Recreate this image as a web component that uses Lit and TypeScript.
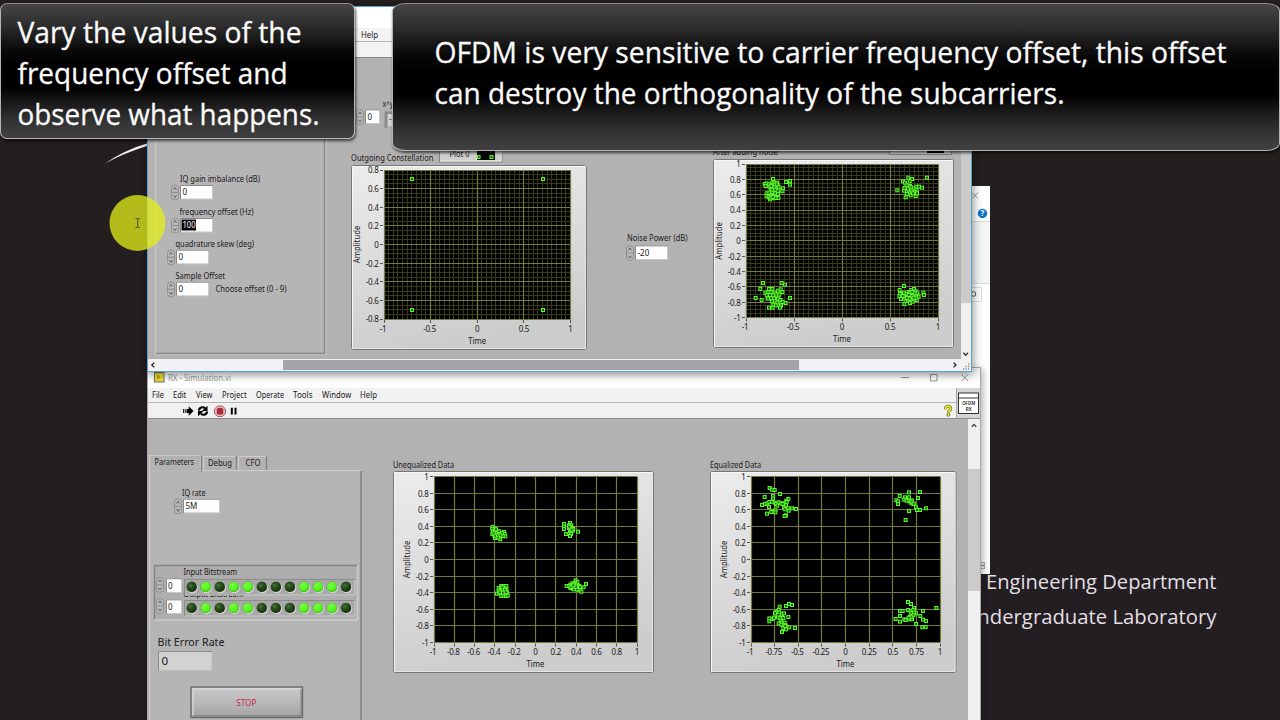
import { LitElement, html, svg, css } from "lit";
import { customElement } from "lit/decorators.js";

type Anchor = "start" | "middle" | "end";

/** Text on a drawing surface, fitted to a given width. */
const label = (
  x: number,
  y: number,
  text: string,
  width = 0,
  cls = "small",
  anchor: Anchor = "start",
) =>
  width
    ? svg`<text class=${cls} x=${x} y=${y} text-anchor=${anchor} textLength=${width} lengthAdjust="spacingAndGlyphs">${text}</text>`
    : svg`<text class=${cls} x=${x} y=${y} text-anchor=${anchor}>${text}</text>`;

/** Inline text with a fixed advance, for bars laid out by flow. */
const word = (text: string, width: number) => html`<svg class="word" width=${width + 1} height="14">
  ${label(0, 9.8, text, width)}
</svg>`;

interface Plot {
  title: string;
  titleX: number;
  titleY: number;
  titleW: number;
  frame: [number, number, number, number];
  area: [number, number, number, number];
  xTicks: string[];
  yTicks: string[];
  minor?: [number, number];
  axis: [number, number];
  origin: [number, number];
  points: string;
}

const outgoing: Plot = {
  title: "Outgoing Constellation",
  titleX: 351,
  titleY: 161,
  titleW: 82.5,
  frame: [351.5, 165.5, 235, 184],
  area: [384, 170, 186.5, 149],
  xTicks: ["-1", "-0.5", "0", "0.5", "1"],
  yTicks: ["0.8", "0.6", "0.4", "0.2", "0", "-0.2", "-0.4", "-0.6", "-0.8"],
  minor: [40, 32],
  axis: [360.3, 244.5],
  origin: [340, 90],
  points: "216,267 609,267 216,660 609,660",
};

const noisy: Plot = {
  title: "After adding noise",
  titleX: 713,
  titleY: 155,
  titleW: 65,
  frame: [713.5, 159.5, 240, 188],
  area: [746, 164, 192, 153.5],
  xTicks: ["-1", "-0.5", "0", "0.5", "1"],
  yTicks: ["1", "0.8", "0.6", "0.4", "0.2", "0", "-0.2", "-0.4", "-0.6", "-0.8", "-1"],
  minor: [40, 40],
  axis: [722, 241],
  origin: [600, 130],
  points:
    "519,147 494,162 500,160 507,163 515,160 523,158 531,158 497,168 508,170 519,168 527,168 533,165 512,174 520,176 529,174 536,170 523,180 515,184 542,181 549,175 547,184 558,156 570,153 570,164 500,190 508,188 517,186 526,190 500,198 506,202 514,198 522,200 530,198 535,204 510,208 520,205 534,192 526,204 516,165 524,164 530,163 514,168 523,172 517,179 526,179 512,203 518,201 " +
    "925,143 936,147 909,154 915,158 929,154 981,143 892,181 920,166 930,168 914,174 924,176 934,172 941,176 949,170 957,170 966,173 950,180 945,186 935,184 926,188 932,196 921,192 917,202 947,198 951,190 912,182 939,190 " +
    "489,459 481,477 467,504 485,510 545,459 555,464 570,504 557,519 507,477 517,477 496,488 505,487 514,486 524,488 534,482 542,478 547,486 500,496 510,495 519,496 529,494 538,494 504,506 513,504 522,505 534,506 541,510 516,514 525,514 532,518 541,518 548,516 520,524 528,526 536,526 543,527 507,533 518,533 540,533 " +
    "912,468 899,480 900,492 898,499 903,507 908,498 912,488 920,492 926,486 934,480 942,477 947,484 940,490 932,494 924,500 934,502 944,498 952,494 956,500 970,488 972,495 950,510 942,508 932,510 924,512 916,508 913,522 930,519 938,515 952,488 921,504 949,503 930,490 937,497 929,506 941,503 927,495 944,490 937,486",
};

const unequalized: Plot = {
  title: "Unequalized Data",
  titleX: 393,
  titleY: 467.5,
  titleW: 61,
  frame: [393.5, 471.5, 260, 201],
  area: [434, 476.5, 203, 166],
  xTicks: ["-1", "-0.8", "-0.6", "-0.4", "-0.2", "0", "0.2", "0.4", "0.6", "0.8", "1"],
  yTicks: ["1", "0.8", "0.6", "0.4", "0.2", "0", "-0.2", "-0.4", "-0.6", "-0.8", "-1"],
  axis: [410.3, 559.5],
  origin: [380, 450],
  points:
    "338,231 337,237 344,236 339,244 345,244 337,252 343,256 350,248 358,244 372,246 350,254 357,252 364,252 374,252 376,259 368,258 345,264 352,260 360,262 361,268 366,250 348,238 341,250 347,258 354,256 361,256 355,263 " +
    "552,222 552,230 552,237 570,219 567,226 574,226 567,234 575,234 570,240 578,242 572,247 558,252 566,252 573,252 570,258 594,245 580,237 571,230 571,236 575,239 568,230 " +
    "364,408 372,408 379,408 356,414 363,416 371,415 379,416 356,422 364,424 372,423 380,424 351,431 358,430 366,432 375,430 382,430 364,438 371,436 378,438 383,437 368,420 375,420 361,427 369,428 377,427 367,412 " +
    "587,391 592,396 585,398 577,400 571,404 560,408 568,408 576,408 584,406 592,404 598,408 571,414 578,416 586,414 594,412 600,412 618,402 611,412 598,420 604,425 590,418 582,418 574,411 581,411 588,410 582,402 580,406",
};

const equalized: Plot = {
  title: "Equalized Data",
  titleX: 710,
  titleY: 467.5,
  titleW: 51,
  frame: [710.5, 471.5, 245.5, 201],
  area: [751, 476.5, 189, 166],
  xTicks: ["-1", "-0.75", "-0.5", "-0.25", "0", "0.25", "0.5", "0.75", "1"],
  yTicks: ["1", "0.8", "0.6", "0.4", "0.2", "0", "-0.2", "-0.4", "-0.6", "-0.8", "-1"],
  axis: [727.3, 559.5],
  origin: [700, 450],
  points:
    "209,114 216,119 224,120 240,132 194,141 219,138 219,146 265,147 186,165 195,162 202,160 208,156 216,155 224,158 207,171 228,162 236,157 244,160 232,167 254,160 259,152 260,156 248,162 258,166 252,173 256,178 265,175 276,175 288,177 266,182 226,181 218,184 226,187 201,191 258,196 254,198 214,186 " +
    "627,127 660,126 599,138 615,142 627,142 654,144 589,151 594,154 611,149 620,152 628,154 635,151 594,162 632,158 640,162 636,155 641,161 648,172 651,180 627,183 660,180 678,175 617,210 " +
    "239,470 258,468 267,462 276,465 226,488 236,480 229,486 238,487 225,490 246,493 252,490 208,505 217,507 222,503 208,514 234,502 241,504 250,504 265,501 242,512 236,520 246,518 254,518 248,526 257,526 250,534 258,538 268,532 285,534 246,546 256,528 244,524 " +
    "624,456 633,462 600,483 608,483 624,480 632,484 642,474 640,480 648,490 634,490 642,488 669,483 709,474 600,498 587,507 600,515 613,508 617,510 626,508 636,508 630,500 640,496 634,502 661,498 669,509 678,513 648,522 667,532 677,531 626,503",
};

const steps = (n: number) => Array.from({ length: n + 1 }, (_, i) => i / n);

const drawPlot = (p: Plot) => {
  const [fx, fy, fw, fh] = p.frame;
  const [ax, ay, aw, ah] = p.area;
  const xs = steps(p.xTicks.length - 1);
  const ys = steps(p.yTicks.length - 1);
  const snap = (v: number) => Math.round(v) + 0.5;
  const grid = (sx: number[], sy: number[]) =>
    sx.map((t) => `M${snap(ax + t * aw - 0.5)} ${ay}v${ah}`).join("") +
    sy.map((t) => `M${ax} ${snap(ay + t * ah - 0.5)}h${aw}`).join("");
  return svg`
    ${label(p.titleX, p.titleY, p.title, p.titleW)}
    <rect x=${fx} y=${fy} width=${fw} height=${fh} rx="2" fill="url(#plate)" stroke="#777"/>
    <path d=${`M${fx + 1} ${fy + fh - 1}V${fy + 1}H${fx + fw - 1}`} fill="none" stroke="#f8f8f8"/>
    <path d=${`M${fx + 1} ${fy + fh - 1}H${fx + fw - 1}V${fy + 1}`} fill="none" stroke="#e4e4e4"/>
    <rect x=${ax} y=${ay} width=${aw} height=${ah} fill="#000"/>
    ${p.minor ? svg`<path class="minor" d=${grid(steps(p.minor[0]), steps(p.minor[1]))}/>` : null}
    <path class="major" d=${grid(xs, ys)}/>
    ${xs.map(
      (t, i) => svg`<path class="tick" d=${`M${snap(ax + t * aw - 0.5)} ${ay + ah + 1}v3`}/>
        ${label(ax + t * aw - (p.xTicks[i][0] === "-" ? 1 : 0), ay + ah + 12.7, p.xTicks[i], 0, "num", "middle")}`,
    )}
    ${ys.map(
      (t, i) => svg`<path class="tick" d=${`M${ax - 4} ${snap(ay + t * ah - 0.5)}h3`}/>
        ${label(ax - 5.5, ay + t * ah + 3.4, p.yTicks[i], 0, "num", "end")}`,
    )}
    ${label(ax + aw / 2, ay + ah + 24.5, "Time", 18, "small", "middle")}
    <g transform=${`translate(${p.axis[0]} ${p.axis[1]}) rotate(-90)`}>${label(0, 0, "Amplitude", 37.5, "small", "middle")}</g>
    ${p.points.split(" ").map((pt) => {
      const [zx, zy] = pt.split(",").map(Number);
      const x = p.origin[0] + zx / 3 - 1.5;
      const y = p.origin[1] + zy / 3 - 1.5;
      return svg`<rect class="dot" x=${x} y=${y} width="3" height="3"/>`;
    })}`;
};

const spinner = (x: number, y: number) => svg`
  <rect x=${x - 3.5} y=${y - 7.5} width="7" height="15" rx="3.5" fill="#b9b9b9" stroke="#858585" stroke-width=".8"/>
  <path d=${`M${x - 3} ${y}h6`} stroke="#808080" stroke-width=".8"/>
  <path d=${`M${x - 1.5} ${y - 2.7}l1.5 -2.4 1.5 2.4M${x - 1.5} ${y + 2.7}l1.5 2.4 1.5 -2.4`} fill="none" stroke="#4a4a4a" stroke-width=".8"/>`;

const field = (x: number, y: number, w: number, h: number, fill = "#fdfdfd") => svg`
  <rect x=${x - 1} y=${y - 1} width=${w + 2} height=${h + 2} fill="#c9c9c9"/>
  <path d=${`M${x - 0.5} ${y + h + 1}V${y - 0.5}H${x + w + 1}`} fill="none" stroke="#8a8a8a"/>
  <rect x=${x} y=${y} width=${w} height=${h} fill=${fill}/>`;

const numeric = (x: number, cy: number, w: number, value: string) => svg`
  ${spinner(x - 6, cy)}${field(x, cy - 6.5, w, 12.5)}${label(x + 1.5, cy + 2.8, value)}`;

const gradients = svg`<defs>
  <linearGradient id="plate" x1="0" y1="0" x2=".25" y2="1">
    <stop offset="0" stop-color="#ececec"/><stop offset="1" stop-color="#cdcdcd"/>
  </linearGradient>
  <linearGradient id="button" x1="0" y1="0" x2="0" y2="1">
    <stop offset="0" stop-color="#c9c9c9"/><stop offset=".5" stop-color="#b9b9b9"/><stop offset="1" stop-color="#a2a2a2"/>
  </linearGradient>
  <radialGradient id="on" cx=".4" cy=".35" r=".7">
    <stop offset="0" stop-color="#7dff4a"/><stop offset=".6" stop-color="#55f71e"/><stop offset="1" stop-color="#3cc60f"/>
  </radialGradient>
  <radialGradient id="off" cx=".38" cy=".35" r=".7">
    <stop offset="0" stop-color="#4d7140"/><stop offset=".4" stop-color="#27501a"/><stop offset="1" stop-color="#142c0c"/>
  </radialGradient>
</defs>`;

const BITS = "010110001110";

const bitRow = (cy: number) => svg`
  ${spinner(160, cy - 2)}${field(167, cy - 7.5, 14, 12.5)}${label(168, cy + 2, "0")}
  <rect x="184.5" y=${cy - 7.5} width="170" height="15" fill="#a9a9a9"/>
  <path d=${`M184.5 ${cy + 8}V${cy - 7.5}H355`} fill="none" stroke="#8b8b8b"/>
  <path d=${`M185 ${cy + 8}H355V${cy - 7}`} fill="none" stroke="#c9c9c9"/>
  ${[...BITS].map((b, i) => {
    const x = 191.7 + i * 14.03;
    return svg`<circle cx=${x + 0.7} cy=${cy + 0.9} r="5.5" fill="#d2d2d2"/>
      <circle cx=${x - 0.2} cy=${cy - 0.2} r="5.4" fill="#7f8a7c"/>
      <circle cx=${x} cy=${cy} r="5.1" fill=${b === "1" ? "url(#on)" : "url(#off)"}/>`;
  })}`;

const sheet = css`
  :host {
    display: block;
  }
  svg {
    display: block;
    flex: none;
  }
  .word {
    overflow: visible;
  }
  text {
    fill: #1a1a1a;
    font-family: "Noto Sans", "Open Sans", sans-serif;
  }
  .small {
    font-size: 8px;
  }
  .num {
    font-size: 8px;
    letter-spacing: -0.3px;
  }
  .dim {
    font-size: 8px;
    fill: #9c9c9c;
  }
  .minor {
    stroke: #383a1a;
    fill: none;
  }
  .major {
    stroke: #747a3c;
    fill: none;
    stroke-width: 1.2;
  }
  .tick {
    stroke: #555;
    fill: none;
  }
  .dot {
    fill: #17600b;
    stroke: #5cf52c;
    stroke-width: 1;
  }
`;

@customElement("tx-window")
class TxWindow extends LitElement {
  static styles = [
    sheet,
    css`
      .window {
        box-sizing: border-box;
        width: 825px;
        height: 366px;
        border: 1px solid #5e9fce;
        background: #b2b2b2;
        display: flex;
        flex-direction: column;
        box-shadow: 1px 2px 9px rgba(0, 0, 0, 0.45);
      }
      .title {
        height: 21px;
        background: #fff;
      }
      .menu {
        height: 13px;
        display: flex;
        align-items: center;
        padding-left: 212.5px;
        background: #f3f3f3;
        border-bottom: 1px solid #b5b5b5;
      }
      .tools {
        height: 15px;
        background: #f3f3f3;
        border-bottom: 1px solid #8c8c8c;
      }
      .body {
        display: flex;
        flex: 1;
        min-height: 0;
      }
      .vbar {
        width: 10px;
        background: #f0f0f0;
        display: flex;
        flex-direction: column;
        justify-content: space-between;
      }
      .vthumb {
        height: 245px;
        background: #cbcbcb;
      }
      .hbar {
        height: 12px;
        display: flex;
        align-items: stretch;
        background: #f1f1f4;
      }
      .hthumb {
        width: 516px;
        margin: 1px 0 1px 124px;
        background: #a4a3a7;
      }
      .harrow {
        margin-left: 150px;
      }
      .selected {
        fill: #fff;
      }
    `,
  ];
  render() {
    return html`<section class="window">
      <header class="title"></header>
      <nav class="menu">${word("Help", 17)}</nav>
      <div class="tools"></div>
      <div class="body">
        <svg width="813" height="301" viewBox="148 58 813 301">
          ${gradients}
          <rect x="155" y="40" width="170" height="314" fill="#b5b5b5" />
          <path d="M155.5 50V353.5" stroke="#c8c8c8" stroke-width="1.5" />
          <path d="M156 353.5H324.5V50" fill="none" stroke="#858585" stroke-width="1.3" />
          <path d="M155 354.7H326V50" fill="none" stroke="#c2c2c2" />
          ${numeric(366, 117, 13, "0")} ${label(382.5, 107, "x^y", 11)}
          <path d="M386 128V113H395" fill="none" stroke="#8b8b8b" stroke-width="3" />
          <path d="M387.5 128V115H395V128z" fill="#b0b0b0" />
          <rect x="388" y="114" width="10" height="12" fill="#d6d6d6" />${label(389, 122, "-")}
          ${label(180, 181.5, "IQ gain imbalance (dB)", 80)} ${numeric(181, 192.5, 31, "0")}
          ${label(179.5, 214.5, "frequency offset (Hz)", 74)} ${numeric(181, 225.5, 31, "")}
          <rect x="181.5" y="219.5" width="14.5" height="11" fill="#050505" />
          ${label(182.5, 228.3, "100", 13, "small selected")}
          ${label(175.5, 246.5, "quadrature skew (deg)", 78.5)} ${numeric(177, 257.3, 31, "0")}
          ${label(175.5, 278.5, "Sample Offset", 49.5)} ${numeric(177, 289.3, 31, "0")}
          ${label(215.5, 292.3, "Choose offset (0 - 9)", 71)}
          <rect x="439.5" y="145.5" width="62.5" height="16.5" fill="#cfcfcf" stroke="#838383" />
          <path d="M440.5 161H501V146" fill="none" stroke="#eee" />
          ${label(449.5, 156.8, "Plot 0", 20)}
          <rect x="477" y="148" width="18" height="12" fill="#050505" />
          <rect class="dot" x="477.5" y="155.5" width="2.5" height="3" />
          <rect class="dot" x="490" y="155.5" width="3" height="3" />
          ${drawPlot(outgoing)}
          ${label(627, 241, "Noise Power (dB)", 60.5)} ${numeric(636, 253, 31, "-20")}
          <rect x="889.5" y="140.5" width="62" height="14" fill="#cfcfcf" stroke="#838383" />
          <rect x="927" y="144" width="17" height="9" fill="#050505" />
          ${drawPlot(noisy)}
        </svg>
        <div class="vbar">
          <div class="vthumb"></div>
          <svg width="9" height="11"><path d="M2.4 4.8 4.7 7.3 7 4.8" fill="none" stroke="#333" stroke-width="1.3" /></svg>
        </div>
      </div>
      <footer class="hbar">
        <svg width="11" height="12"><path d="M6.3 3.6 3.8 6l2.5 2.4" fill="none" stroke="#222" stroke-width="1.3" /></svg>
        <div class="hthumb"></div>
        <svg class="harrow" width="22" height="12">
          <path d="M4.500 3.600 7 6 4.500 8.400" fill="none" stroke="#222" stroke-width="1.3" />
          <path d="M19 5h1.400M16.500 7.500h1.400M19 7.500h1.400M14 10h1.400M16.500 10h1.400M19 10h1.400" stroke="#999" stroke-width="1.300" />
        </svg>
      </footer>
    </section>`;
  }
}

const MENU: [string, number][] = [
  ["File", 12],
  ["Edit", 13.3],
  ["View", 16.5],
  ["Project", 24.7],
  ["Operate", 28],
  ["Tools", 19.5],
  ["Window", 29.3],
  ["Help", 17],
];

@customElement("rx-window")
class RxWindow extends LitElement {
  static styles = [
    sheet,
    css`
      .window {
        box-sizing: border-box;
        width: 834px;
        height: 353px;
        border: 1px solid #a9a9a9;
        border-bottom: 0;
        background: #b2b2b2;
        display: flex;
        flex-direction: column;
        box-shadow: 2px 2px 7px rgba(0, 0, 0, 0.3);
      }
      .title {
        height: 20px;
        display: flex;
        align-items: center;
        background: linear-gradient(#eef2f3, #fff 70%);
      }
      .grow {
        flex: 1;
      }
      .head {
        box-sizing: border-box;
        display: flex;
        height: 31px;
        background: #f1f1f1;
        border-bottom: 1px solid #8c8c8c;
      }
      .bars {
        flex: 1;
        display: flex;
        flex-direction: column;
        border-right: 1px solid #aaa;
      }
      .menu {
        height: 14px;
        display: flex;
        align-items: center;
        gap: 8.3px;
        padding-left: 4px;
        border-bottom: 1px solid #b5b5b5;
      }
      .tools {
        flex: 1;
        display: flex;
        justify-content: space-between;
        align-items: center;
        padding: 0 2px 0 33px;
      }
      .body {
        display: flex;
        height: 301px;
      }
      .vbar {
        width: 12px;
        height: 301px;
        background: #f0f0f0;
      }
      .vthumb {
        height: 122px;
        margin-top: 38px;
        background: #cbcbcb;
      }
      .stop {
        font-size: 8.8px;
        fill: #c81e46;
      }
      .big {
        font-size: 11.5px;
      }
      .badge {
        font-size: 5px;
        font-weight: 600;
      }
    `,
  ];
  render() {
    return html`<section class="window">
      <header class="title">
        <svg width="20" height="20">
          <rect x="6.500" y="4.500" width="9.500" height="9.500" fill="#e9dd2c" stroke="#6d7079" />
          <path d="M9 6.500v5.500l4-2.700z" fill="#c89a10" />
        </svg>
        <svg class="word" width="66" height="20">${label(0, 12.8, "RX - Simulation.vi", 63, "dim")}</svg>
        <div class="grow"></div>
        <svg width="81" height="20">
          <path d="M2 9.500h8M31.500 6.500h6.500v6.500h-6.500zM62.500 6.500l6.500 6.500M69 6.500l-6.500 6.500" fill="none" stroke="#888" stroke-width=".9" />
        </svg>
      </header>
      <div class="head">
        <div class="bars">
          <nav class="menu">${MENU.map(([t, w]) => word(t, w))}</nav>
          <div class="tools">
            <svg width="60" height="14">
              <path d="M2.500 5v4M4.200 5v4" stroke="#222" stroke-width="1" />
              <path d="M5.500 5h2.200V2.300L12.500 7l-4.800 4.700V9H5.500z" fill="#000" />
              <path d="M18 6.500c0-3 4-4.200 6-2.300M26 7.500c0 3-4 4.200-6 2.300" fill="none" stroke="#000" stroke-width="2.200" />
              <path d="M26.500 1.800v5.200h-5.700zM17 12.200V7h5.700z" fill="#000" />
              <path d="M36.700 2h4.600l3.200 3v4.500l-3.200 3h-4.600l-3.200-3V5z" fill="#e8b5b8" stroke="#884a50" stroke-width=".8" />
              <rect x="35.800" y="4" width="6.400" height="6.400" rx="1.500" fill="#a92b3b" />
              <path d="M50.800 3.800v6.600M54.500 3.800v6.600" stroke="#000" stroke-width="2" />
            </svg>
            <svg width="12" height="14">
              <path d="M3.500 5.200C3.500 1.200 9 1.500 8.700 4.800c-.3 2-2.300 1.800-2.300 3.800" fill="none" stroke="#55551c" stroke-width="3" />
              <path d="M3.500 5.200C3.500 1.200 9 1.500 8.700 4.800c-.3 2-2.300 1.800-2.300 3.800" fill="none" stroke="#e2ea22" stroke-width="1.900" />
              <circle cx="6.400" cy="10.800" r="1.500" fill="#e2ea22" stroke="#55551c" stroke-width=".7" />
            </svg>
          </div>
        </div>
        <svg width="23" height="30" viewBox="957 388 23 30">
          <rect x="957" y="388" width="23" height="31" fill="#d5d5d5" />
          <rect x="958.500" y="393" width="20" height="20.500" fill="#fff" stroke="#333" />
          <path d="M958 398h21" stroke="#333" />
          ${label(968.7, 405, "OFDM", 13, "badge", "middle")} ${label(968.7, 411, "RX", 6, "badge", "middle")}
        </svg>
      </div>
      <div class="body">
        <svg width="820" height="301" viewBox="148 419 820 301">
          ${gradients}
          <rect x="148" y="470" width="213" height="250" fill="#b5b5b5" />
          <path d="M149.500 720V455.500h51V470.500H361" fill="none" stroke="#cdcdcd" />
          <path d="M201.500 456V471.500M361 471V720" fill="none" stroke="#7f7f7f" stroke-width="1.400" />
          <path d="M203.500 470V456.500h32M238.500 470V456.500H266" fill="none" stroke="#cdcdcd" />
          <path d="M236.500 456V470M266.500 456V470" stroke="#858585" stroke-width="1.300" />
          ${label(154.5, 464.5, "Parameters", 39.5)} ${label(208, 465.5, "Debug", 24)}
          ${label(245.5, 465.5, "CFO", 15)} ${label(182, 495.5, "IQ rate", 23.5)}
          ${numeric(184, 506.3, 35, "5M")}
          <rect x="154" y="565" width="203" height="55" fill="#aeaeae" />
          <path d="M154.500 620V565.500H357" fill="none" stroke="#848484" stroke-width="1.500" />
          <path d="M154 620H357.500V566" fill="none" stroke="#cacaca" stroke-width="1.500" />
          ${label(183.5, 574.9, "Input Bitstream", 53.5)} ${label(183.5, 596.5, "Output Bitstream", 60)}
          ${bitRow(586.9)} ${bitRow(608)}
          ${label(157.5, 645.5, "Bit Error Rate", 67, "big")}
          ${field(159, 652, 52, 17.5, "#d2d3d1")} ${label(161.5, 665, "0", 0, "big")}
          <rect x="191" y="687" width="111.500" height="30.500" fill="url(#button)" stroke="#6c6c6c" stroke-width="1.400" />
          <path d="M193 716V689H301" fill="none" stroke="#d8d8d8" stroke-width="1.300" />
          <path d="M193 716H301.200V689" fill="none" stroke="#828282" stroke-width="1.300" />
          ${label(246.3, 705.5, "STOP", 20, "stop", "middle")}
          ${drawPlot(unequalized)} ${drawPlot(equalized)}
        </svg>
        <div class="vbar">
          <svg width="12" height="12"><path d="M3.700 7.800 6 5.300 8.300 7.800" fill="none" stroke="#333" stroke-width="1.200" /></svg>
          <div class="vthumb"></div>
        </div>
      </div>
    </section>`;
  }
}

@customElement("app-root")
class AppRoot extends LitElement {
  static styles = [
    sheet,
    css`
      .desktop {
        position: relative;
        width: 1280px;
        height: 720px;
        overflow: hidden;
        background: linear-gradient(#231f1f 0 238px, #231e22 240px);
      }
      .layer {
        position: absolute;
      }
      .wall {
        left: 0;
        top: 0;
      }
      .files {
        left: 800px;
        top: 186px;
      }
      .rx {
        left: 147px;
        top: 367px;
      }
      .tx {
        left: 147px;
        top: 6px;
      }
      .note {
        box-sizing: border-box;
        border: 1px solid #b4b4b4;
        border-top-color: #8c8c8c;
        background: linear-gradient(#454545, #2d2d2d 16%, #070707 36%, #000 48%, #000 62%, #161616 72%, #343434 88%, #404040);
        box-shadow: 1px 2px 3px rgba(0, 0, 0, 0.65);
      }
      .note-a {
        left: 0;
        top: 3px;
        width: 355px;
        height: 136px;
        border-radius: 7px;
      }
      .note-b {
        left: 392px;
        top: 3px;
        width: 888px;
        height: 148px;
        border-radius: 14px / 8px;
      }
      .caption {
        font-family: "Open Sans", "Noto Sans", sans-serif;
        font-size: 28.3px;
        fill: #fafafa;
        stroke: #fafafa;
        stroke-width: 0.3px;
      }
      .brand {
        font-family: "Open Sans", "Noto Sans", sans-serif;
        font-size: 20.8px;
        fill: #e4dfe3;
      }
      .help {
        font-size: 8px;
        font-weight: 700;
        fill: #fff;
      }
      .pointer {
        left: 109px;
        top: 194px;
      }
    `,
  ];
  render() {
    return html`<main class="desktop">
      <svg class="layer wall" width="1280" height="720">
        <path d="M105 163.500Q124 150 150 142.500L150 145Q124 153 105 163.500z" fill="#eee" />
        ${label(1216.5, 589, "Computer Engineering Department", 330.5, "brand", "end")}
        ${label(1216.5, 624, "Undergraduate Laboratory", 254, "brand", "end")}
      </svg>
      <svg class="layer files" width="190" height="388">
        <rect width="190" height="388" fill="#fff" />
        <rect y="36" width="190" height="61" fill="#f3f4f6" />
        <path d="M0 35.500h190M0 97.500h190" stroke="#dcdde0" />
        <path d="M172 6.500l6 6M178 6.500l-6 6" stroke="#999" />
        <circle cx="182.500" cy="27.500" r="4.700" fill="#1272c4" />
        ${label(182.5, 30.3, "?", 0, "help", "middle")}
        <rect x="100" y="101.500" width="81.500" height="14" fill="#fff" stroke="#d9d9d9" />
        <circle cx="173.500" cy="108" r="2.300" fill="none" stroke="#555" />
        <rect x="178.500" y="376.500" width="6" height="6" fill="#eee" stroke="#aaa" />
        <path d="M180 379.500h4" stroke="#777" />
      </svg>
      <rx-window class="layer rx"></rx-window>
      <tx-window class="layer tx"></tx-window>
      <svg class="layer pointer" width="58" height="58">
        <circle cx="28.500" cy="29" r="28" fill="#e2ee1a" fill-opacity=".76" />
        <path d="M26.500 24.500h1.500l.7.800.7-.8h1.500M28.700 25v8M26.500 33.500h1.500l.7-.8.7.8h1.500" fill="none" stroke="#4b4d12" />
      </svg>
      <div class="layer note note-a">
        <svg width="353" height="134" viewBox="1 4 353 134">
          ${label(17.5, 42.6, "Vary the values of the", 284, "caption")}
          ${label(17.5, 83.8, "frequency offset and", 270, "caption")}
          ${label(17.5, 125, "observe what happens.", 302, "caption")}
        </svg>
      </div>
      <div class="layer note note-b">
        <svg width="886" height="146" viewBox="393 4 886 146">
          ${label(434.5, 63.2, "OFDM is very sensitive to carrier frequency offset, this offset", 792, "caption")}
          ${label(434.5, 104.4, "can destroy the orthogonality of the subcarriers.", 630, "caption")}
        </svg>
      </div>
    </main>`;
  }
}
